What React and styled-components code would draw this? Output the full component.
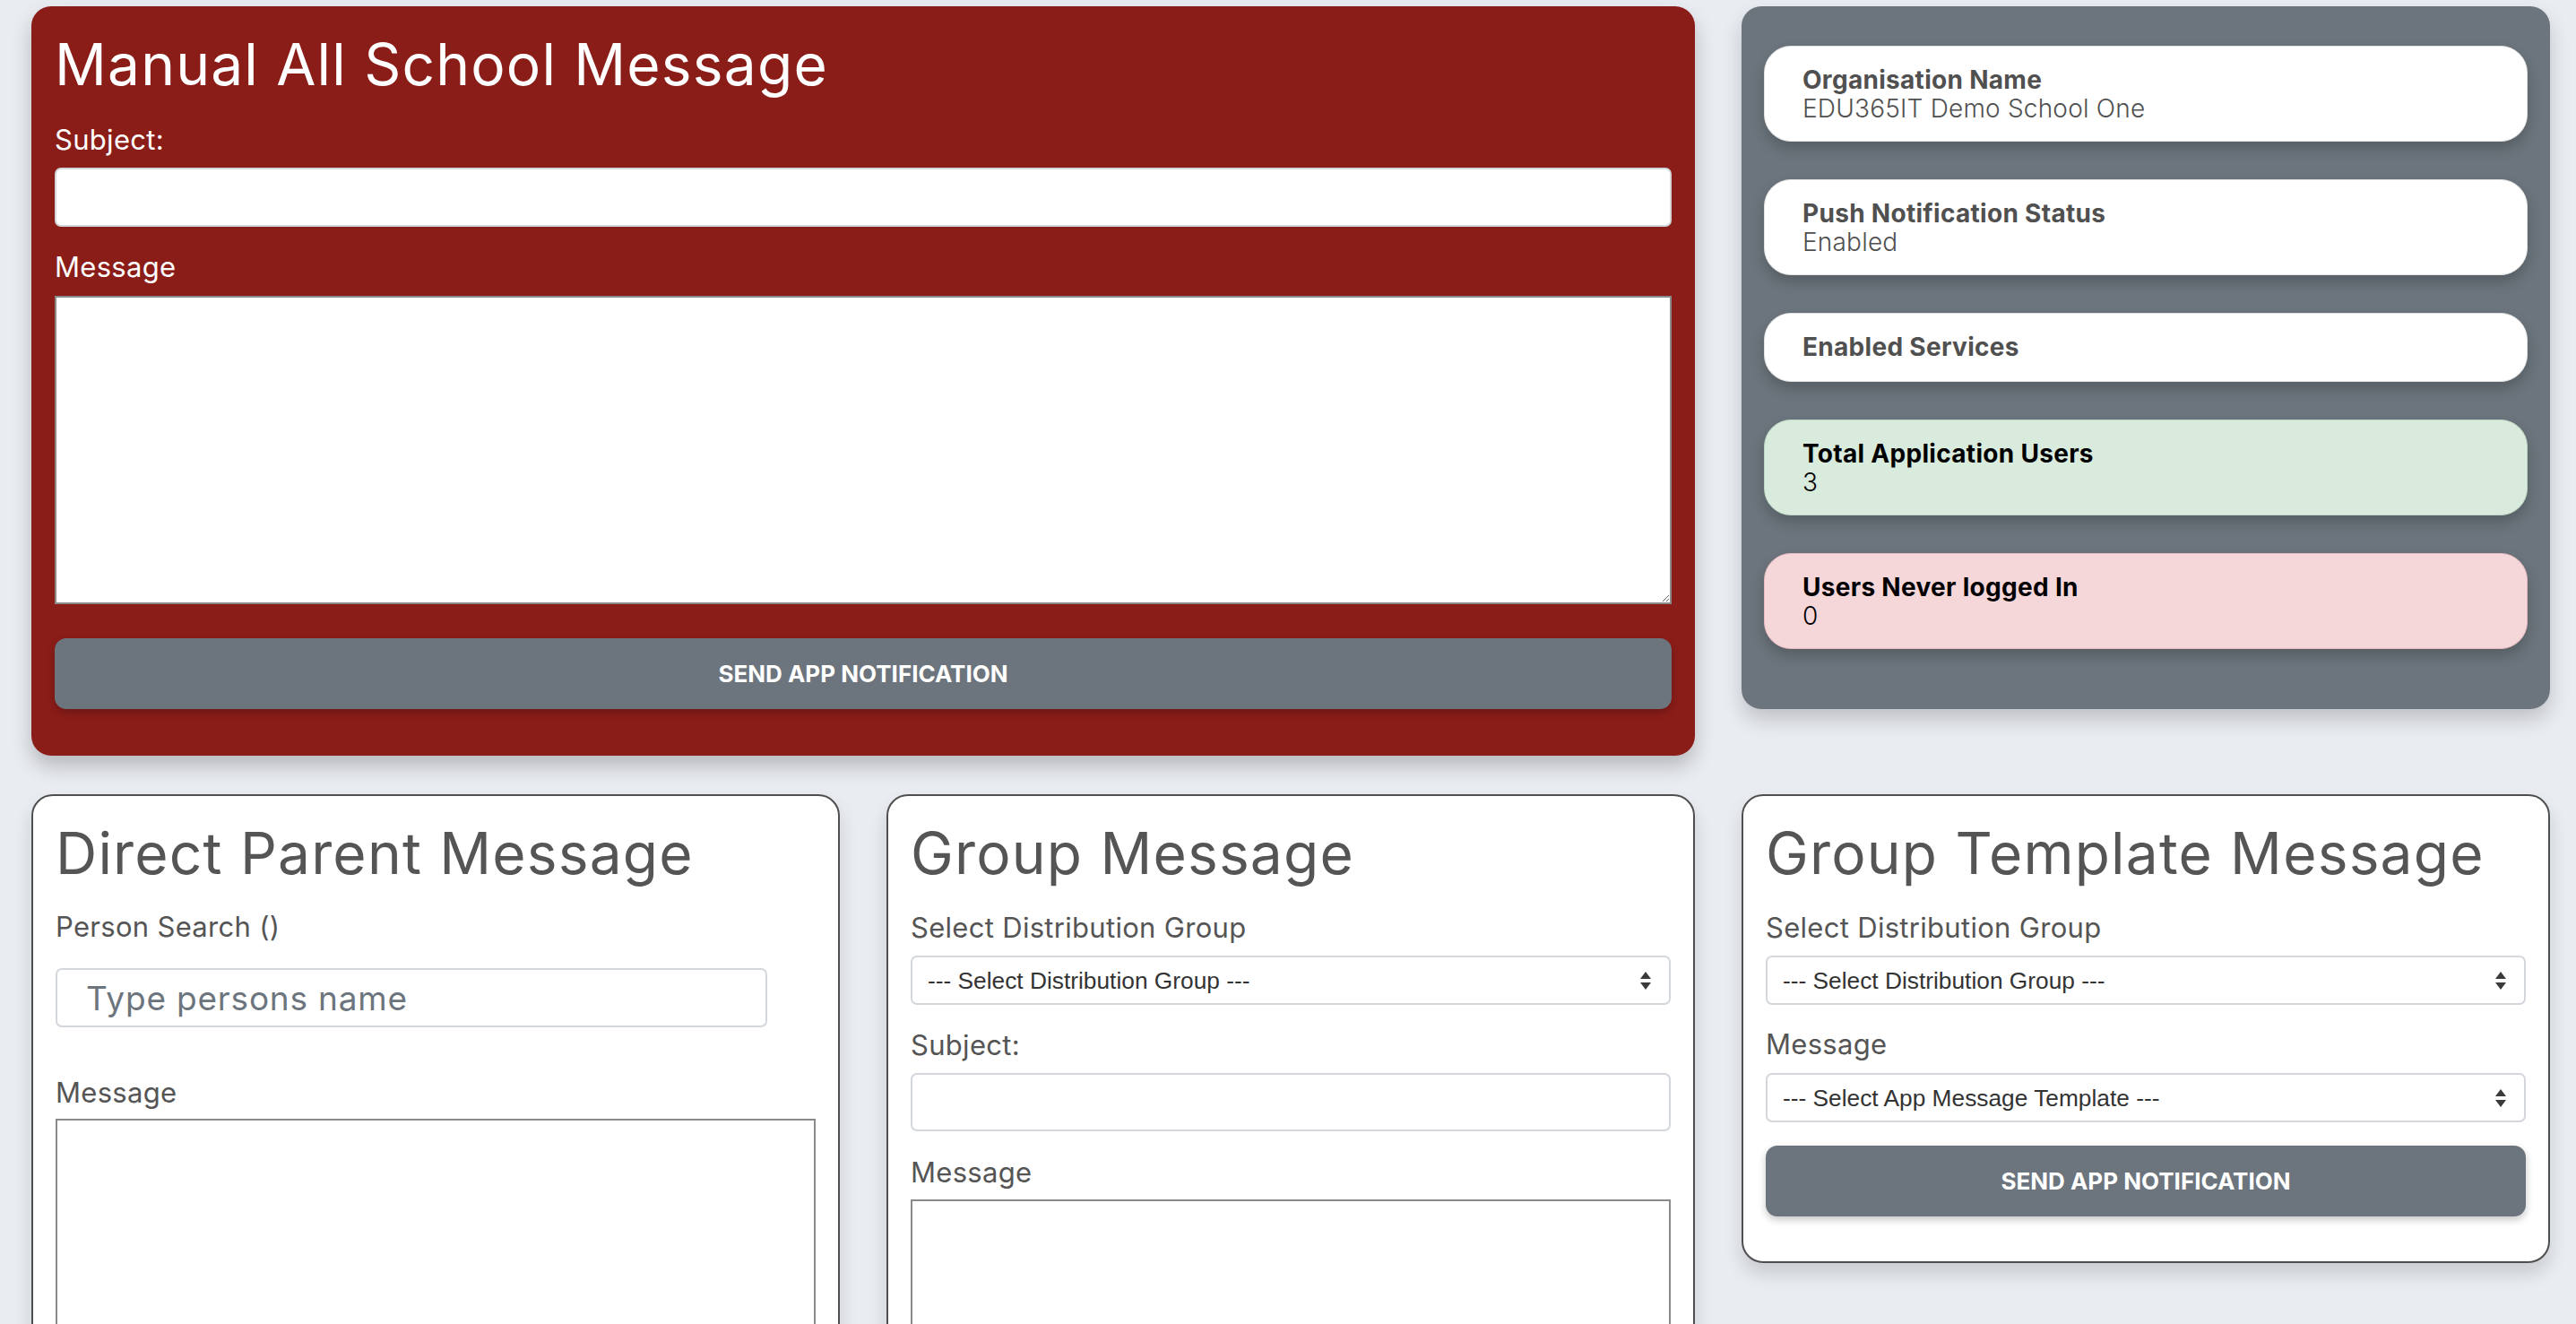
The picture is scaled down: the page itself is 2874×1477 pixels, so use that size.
import React from 'react';
import styled, { createGlobalStyle } from 'styled-components';

const GlobalStyle = createGlobalStyle`
  html, body {
    margin: 0;
    padding: 0;
    height: 100%;
    overflow: hidden;
    background: #e9ecf1;
  }
  body {
    font-family: Inter, "Open Sans", sans-serif;
  }
  * {
    box-sizing: border-box;
  }
`;

const Page = styled.div`
  height: 1477px;
  overflow: hidden;
  padding: 7px 29px 0 35px;
`;

const Grid = styled.div`
  display: grid;
  grid-template-columns: repeat(3, 1fr);
  column-gap: 52px;
  row-gap: 43px;
  align-items: start;
`;

const RedCard = styled.section`
  grid-column: span 2;
  background: #8b1d18;
  border-radius: 22px;
  padding: 26px 26px 52px;
  color: #fff;
  box-shadow: 0 12px 22px rgba(0, 0, 0, 0.22);
`;

const FormCard = styled.section`
  background: #fff;
  border: 2px solid #4f4f4f;
  border-radius: 24px;
  padding: 25px 25px 50px;
  color: #555;
  box-shadow: 0 12px 20px rgba(0, 0, 0, 0.14);
`;

const Title = styled.h1`
  margin: 0;
  font-size: 64px;
  font-weight: 400;
  line-height: 77px;
  letter-spacing: 1.2px;
  color: ${props => props.color || '#555'};
`;

const Label = styled.label`
  display: block;
  margin: ${props => props.$top ?? 21}px 0 ${props => props.$bottom ?? 7}px;
  font-size: 31px;
  line-height: 48px;
  font-weight: 400;
  letter-spacing: 0.3px;
  color: ${props => props.color || '#555'};
`;

const TextInput = styled.input`
  display: block;
  width: ${props => props.$width || '100%'};
  height: ${props => props.$height || 66}px;
  border: 2px solid #d3d7dc;
  border-radius: 7px;
  background: #fff;
  padding: 0 32px;
  font-family: inherit;
  font-size: 37px;
  letter-spacing: 0.8px;
  color: #212529;
  outline: none;
  &::placeholder {
    color: #6c757d;
  }
`;

const TextArea = styled.textarea`
  display: block;
  width: 100%;
  height: ${props => props.$height}px;
  border: 2px solid #8a8a8a;
  border-radius: 0;
  background: #fff;
  outline: none;
`;

const SelectWrap = styled.div`
  position: relative;
  svg {
    position: absolute;
    right: 21px;
    top: 50%;
    transform: translateY(-50%);
    pointer-events: none;
  }
`;

const Select = styled.select`
  display: block;
  width: 100%;
  height: 55px;
  appearance: none;
  border: 2px solid #d3d7dc;
  border-radius: 7px;
  background: #fff;
  padding: 0 60px 0 17px;
  font-family: "Liberation Sans", Arial, sans-serif;
  font-size: 26.3px;
  color: #333;
  outline: none;
`;

const Button = styled.button`
  display: block;
  width: 100%;
  height: 79px;
  margin-top: ${props => props.$top}px;
  border: none;
  border-radius: 13px;
  background: #6c757d;
  color: #fff;
  font-family: inherit;
  font-size: 26px;
  font-weight: 700;
  letter-spacing: 0;
  text-transform: uppercase;
  box-shadow: 0 4px 8px rgba(0, 0, 0, 0.22);
  cursor: pointer;
`;

const StatusPanel = styled.aside`
  background: #6c757d;
  border-radius: 22px;
  padding: 44px 25px 25px;
  box-shadow: 0 12px 22px rgba(0, 0, 0, 0.18);
`;

const tones = {
  plain: { bg: '#fff', border: '#e3e3e3', text: '#505050' },
  success: { bg: '#d9ebdc', border: '#bcd7c3', text: '#000' },
  danger: { bg: '#f5d7da', border: '#e8bcc1', text: '#000' },
};

const InfoCard = styled.div`
  background: ${props => tones[props.$tone].bg};
  border: 1px solid ${props => tones[props.$tone].border};
  border-radius: 30px;
  padding: 21px 42px;
  margin-bottom: 42px;
  color: ${props => tones[props.$tone].text};
  box-shadow: 0 8px 16px rgba(0, 0, 0, 0.2);
`;

const InfoTitle = styled.div`
  font-size: 28px;
  line-height: 33px;
  font-weight: 700;
  letter-spacing: 0.3px;
`;

const InfoValue = styled.div`
  font-size: 28px;
  line-height: 30px;
  font-weight: 300;
  letter-spacing: 0.2px;
`;

function UpDown() {
  return (
    <svg width="14" height="22" viewBox="0 0 14 22">
      <path d="M7 1 L13 9 L1 9 Z" fill="#3a3a3a" />
      <path d="M7 21 L13 13 L1 13 Z" fill="#3a3a3a" />
    </svg>
  );
}

function Dropdown({ placeholder }) {
  return (
    <SelectWrap>
      <Select defaultValue="">
        <option value="">{placeholder}</option>
      </Select>
      <UpDown />
    </SelectWrap>
  );
}

const stats = [
  { label: 'Organisation Name', value: 'EDU365IT Demo School One', tone: 'plain' },
  { label: 'Push Notification Status', value: 'Enabled', tone: 'plain' },
  { label: 'Enabled Services', tone: 'plain' },
  { label: 'Total Application Users', value: '3', tone: 'success' },
  { label: 'Users Never logged In', value: '0', tone: 'danger' },
];

export default function App() {
  return (
    <Page>
      <GlobalStyle />
      <Grid>
        <RedCard>
          <Title color="#fff">Manual All School Message</Title>
          <Label color="#fff" $top={22}>Subject:</Label>
          <TextInput type="text" />
          <Label color="#fff" $bottom={8}>Message</Label>
          <TextArea $height={344} />
          <Button $top={38}>Send App Notification</Button>
        </RedCard>

        <StatusPanel>
          {stats.map(s => (
            <InfoCard key={s.label} $tone={s.tone}>
              <InfoTitle>{s.label}</InfoTitle>
              {s.value && <InfoValue>{s.value}</InfoValue>}
            </InfoCard>
          ))}
        </StatusPanel>

        <FormCard>
          <Title>Direct Parent Message</Title>
          <Label $top={20} $bottom={22}>Person Search ()</Label>
          <TextInput type="text" placeholder="Type persons name" $width="794px" />
          <Label $top={49} $bottom={5}>Message</Label>
          <TextArea $height={420} />
        </FormCard>

        <FormCard>
          <Title>Group Message</Title>
          <Label>Select Distribution Group</Label>
          <Dropdown placeholder="--- Select Distribution Group ---" />
          <Label>Subject:</Label>
          <TextInput type="text" $height={65} />
          <Label $top={22} $bottom={6}>Message</Label>
          <TextArea $height={360} />
        </FormCard>

        <FormCard>
          <Title>Group Template Message</Title>
          <Label>Select Distribution Group</Label>
          <Dropdown placeholder="--- Select Distribution Group ---" />
          <Label $top={20} $bottom={8}>Message</Label>
          <Dropdown placeholder="--- Select App Message Template ---" />
          <Button $top={26}>Send App Notification</Button>
        </FormCard>
      </Grid>
    </Page>
  );
}
